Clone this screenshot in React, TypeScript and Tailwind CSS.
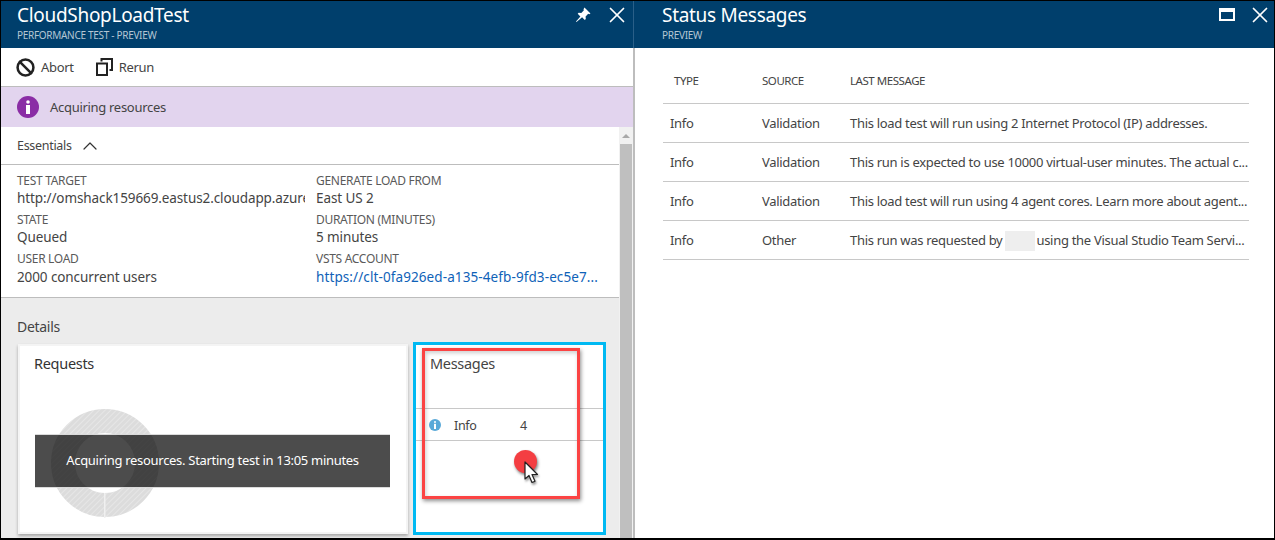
import React from 'react';
import { Ban, X, ChevronUp } from 'lucide-react';

const Field = ({ label, children, last }: { label: string; children: React.ReactNode; last?: boolean }) => (
  <div className="h-[39px] pt-[8px]">
    <div className="text-[12px] leading-[16px] text-[#5a5a5a] tracking-[-0.3px] whitespace-nowrap">{label}</div>
    <div className={last ? "text-[13.5px] leading-[18px] mt-[1px] text-[#444] tracking-[-0.1px] overflow-hidden whitespace-nowrap" : "text-[13.5px] leading-[18px] text-[#444] tracking-[-0.1px] overflow-hidden whitespace-nowrap"}>{children}</div>
  </div>
);

const BladeHeader = ({ title, subtitle, children }: { title: string; subtitle: string; children: React.ReactNode }) => (
  <div className="h-[47px] bg-[#003f6c] flex justify-between">
    <div className="text-white">
      <div className="text-[19px] leading-[26px] pt-[1px]">{title}</div>
      <div className="text-[10px] leading-[14px] text-[#b4c6d4]">{subtitle}</div>
    </div>
    {children}
  </div>
);

const rows = [
  ['Validation', 'This load test will run using 2 Internet Protocol (IP) addresses.'],
  ['Validation', 'This run is expected to use 10000 virtual-user minutes. The actual c...'],
  ['Validation', 'This load test will run using 4 agent cores. Learn more about agent...'],
];

export default function App() {
  return (
    <div className="w-[1275px] h-[540px] border border-black border-b-2 bg-white flex overflow-hidden font-['Noto_Sans',sans-serif] tracking-[-0.3px]">
      {/* left blade */}
      <div className="w-[632px] shrink-0 flex flex-col">
        <div className="pl-[16px] pr-[3px] bg-[#003f6c]">
          <BladeHeader title="CloudShopLoadTest" subtitle="PERFORMANCE TEST - PREVIEW">
            <div className="flex items-start gap-[13px] pt-[1px] text-white">
              <svg width="16" height="16" viewBox="0 0 16 16" className="mt-[5px]" fill="white">
                <path d="M9.500 0.500 15.500 6.500l-1.300.7-1-.4-2.600 2.600.2 2.600-1 1-2.700-2.700L1.500 15l-.5-.5 4.400-5.100L2.700 6.700l1-1 2.600.2 2.600-2.600-.4-1z" />
              </svg>
              <X size={26} strokeWidth={1.600} />
            </div>
          </BladeHeader>
        </div>

        <div className="h-[39px] flex items-center pl-[15px] pr-[16px] pt-[2px] gap-[22px] border-b border-[#bdbdbd] text-[13px] text-[#444]">
          <div className="flex items-center gap-[6px]">
            <Ban size={19} strokeWidth={3.200} className="text-[#222] -mt-[2px]" />
            <span>Abort</span>
          </div>
          <div className="flex items-center gap-[6px]">
            <svg width="17" height="18" viewBox="0 0 17 18" fill="none" stroke="#222" strokeWidth="2" className="-mt-[2px]">
              <path d="M1 5.500h10v11.500H1z" />
              <path d="M5.500 3.500V1H16v11h-2.500" />
            </svg>
            <span>Rerun</span>
          </div>
        </div>

        <div className="h-[40px] shrink-0 bg-[#e2d4ee] flex items-center px-[16px] pt-[1px] gap-[11px] text-[13px] text-[#444]">
          <div className="w-[22px] h-[22px] -mt-[1px] rounded-full bg-[#8a2da5] flex items-center justify-center">
            <svg width="6" height="14" viewBox="0 0 6 14" fill="white">
              <circle cx="3" cy="2" r="1.800" />
              <rect x="1" y="5" width="4" height="9" />
            </svg>
          </div>
          <span>Acquiring resources</span>
        </div>

        <div className="flex-1 flex min-h-0">
          <div className="w-[618px] shrink-0 flex flex-col">
            <div className="h-[38px] shrink-0 flex items-center pl-[16px] pr-[16px] pt-[2px] gap-[6px] border-b border-[#bdbdbd] text-[12.500px] text-[#444]">
              <span>Essentials</span>
              <ChevronUp size={24} strokeWidth={1.200} className="text-[#333] -mt-[2px]" />
            </div>
            <div className="h-[133px] shrink-0 grid grid-cols-[299px_1fr] px-[16px] pr-[17px] border-b border-[#bdbdbd]">
              <div className="pr-[11px] min-w-0">
                <Field label="TEST TARGET">http://omshack159669.eastus2.cloudapp.azure</Field>
                <Field label="STATE">Queued</Field>
                <Field label="USER LOAD" last>2000 concurrent users</Field>
              </div>
              <div className="min-w-0">
                <Field label="GENERATE LOAD FROM">East US 2</Field>
                <Field label="DURATION (MINUTES)">5 minutes</Field>
                <Field label="VSTS ACCOUNT" last>
                  <span className="text-[#0f62b8] tracking-[0.1px]">https://clt-0fa926ed-a135-4efb-9fd3-ec5e7...</span>
                </Field>
              </div>
            </div>

            <div className="flex-1 bg-[#ececec] px-[16px] pt-[19px]">
              <div className="text-[14px] leading-[20px] text-[#444]">Details</div>
              <div className="flex mt-[5px] ml-[1px] items-start gap-[5px]">
                <div className="relative w-[390px] h-[190px] mt-[2px] shrink-0 bg-white border-2 border-[#f4f4f4] shadow-[0_2px_3px_rgba(0,0,0,0.3)] pl-[14px] pt-[7px]">
                  <div className="text-[14.500px] leading-[20px] text-[#333]">Requests</div>
                  <svg width="110" height="110" viewBox="0 0 110 110" className="absolute left-[30px] top-[62px]">
                    <defs>
                      <pattern id="hatch" width="4" height="4" patternUnits="userSpaceOnUse" patternTransform="rotate(45)">
                        <rect width="4" height="4" fill="#dcdcdc" />
                        <rect width="1" height="4" fill="#e6e6e6" />
                      </pattern>
                    </defs>
                    <circle cx="55" cy="55" r="42" fill="none" stroke="url(#hatch)" strokeWidth="24" />
                    <rect x="54" y="85" width="1.500" height="25" fill="#f0f0f0" />
                  </svg>
                  <div className="absolute left-[15px] top-[88px] w-[355px] h-[54px] bg-black/70 border-y border-white/80 flex items-center justify-center text-[13px] text-white">
                    Acquiring resources. Starting test in 13:05 minutes
                  </div>
                </div>

                <div className="relative w-[193px] h-[193px] shrink-0 bg-white border-[3px] border-[#00b9f2]">
                  <div className="pl-[14px] pt-[8px] text-[14.500px] leading-[20px] text-[#444]">Messages</div>
                  <div className="mt-[35px] h-[33px] border-y border-[#c8c8c8] flex items-center text-[12.500px] text-[#444] pl-[13px]">
                    <div className="w-[12px] h-[12px] rounded-full bg-[#59a9d8] flex items-center justify-center">
                      <svg width="4" height="8" viewBox="0 0 4 8" fill="white">
                        <circle cx="2" cy="1" r="1" />
                        <rect x="1" y="2.800" width="2" height="5.200" />
                      </svg>
                    </div>
                    <span className="ml-[13px] w-[66px] pt-[3px]">Info</span>
                    <span className="pt-[3px]">4</span>
                  </div>
                  {/* callout around the tile */}
                  <div className="absolute left-[6px] top-[3px] w-[158px] h-[151px] border-[3px] border-[#fb4343] shadow-[1px_2px_4px_rgba(0,0,0,0.45),inset_1px_2px_4px_rgba(0,0,0,0.2)]" />
                  <div className="absolute left-[98px] top-[105px] w-[23px] h-[23px] rounded-full bg-[#f43e42] shadow-[1px_2px_3px_rgba(0,0,0,0.5)]" />
                  <svg width="18" height="24" viewBox="0 0 18 24" className="absolute left-[108px] top-[116px] drop-shadow-[1px_2px_1px_rgba(0,0,0,0.4)]">
                    <path d="M1 1v17l4-3.500 3 7 3-1.300-3-6.700h5.500z" fill="white" stroke="#222" strokeWidth="1.200" strokeLinejoin="round" />
                  </svg>
                </div>
              </div>
            </div>
          </div>

          {/* scrollbar */}
          <div className="w-[14px] shrink-0 flex flex-col bg-[#f1f1f1]">
            <div className="h-[17px] flex items-center justify-center">
              <div className="w-0 h-0 border-x-[4px] border-x-transparent border-b-[4px] border-b-[#a8a8a8]" />
            </div>
            <div className="flex-1 mx-[1px] bg-[#bfbfbf]" />
          </div>
        </div>
      </div>

      <div className="w-[2px] shrink-0 bg-[#bdbdbd]" />

      {/* right blade */}
      <div className="flex-1 min-w-0 flex flex-col">
        <div className="pl-[28px] pr-[1px] bg-[#003f6c] border-l border-[#2a5f88] -ml-[2px]">
          <BladeHeader title="Status Messages" subtitle="PREVIEW">
            <div className="flex items-start gap-[12px] pt-[1px] text-white">
              <div className="w-[16px] h-[13px] mt-[6px] border-2 border-t-[4px] border-white" />
              <X size={26} strokeWidth={1.600} />
            </div>
          </BladeHeader>
        </div>
        <div className="ml-[28px] mr-[25px]">
          <div className="h-[56px] flex items-end pb-[14px] border-b border-[#c8c8c8] text-[11.500px] leading-[16px] text-[#444] tracking-[-0.45px]">
            <span className="w-[99px] pl-[11px]">TYPE</span>
            <span className="w-[88px]">SOURCE</span>
            <span>LAST MESSAGE</span>
          </div>
          {rows.map(([source, message]) => (
            <div key={message} className="h-[39px] pt-[2px] flex items-center border-b border-[#c8c8c8] text-[13px] text-[#444] whitespace-nowrap">
              <span className="w-[99px] pl-[7px]">Info</span>
              <span className="w-[88px]">{source}</span>
              <span>{message}</span>
            </div>
          ))}
          <div className="h-[39px] pt-[2px] flex items-center border-b border-[#c8c8c8] text-[13px] text-[#444] whitespace-nowrap">
            <span className="w-[99px] pl-[7px]">Info</span>
            <span className="w-[88px]">Other</span>
            <span>This run was requested by</span>
            <span className="w-[30px] h-[20px] ml-[3px] mr-[1px] bg-[#eeeeee]" />
            <span>using the Visual Studio Team Servi...</span>
          </div>
        </div>
      </div>
    </div>
  );
}
